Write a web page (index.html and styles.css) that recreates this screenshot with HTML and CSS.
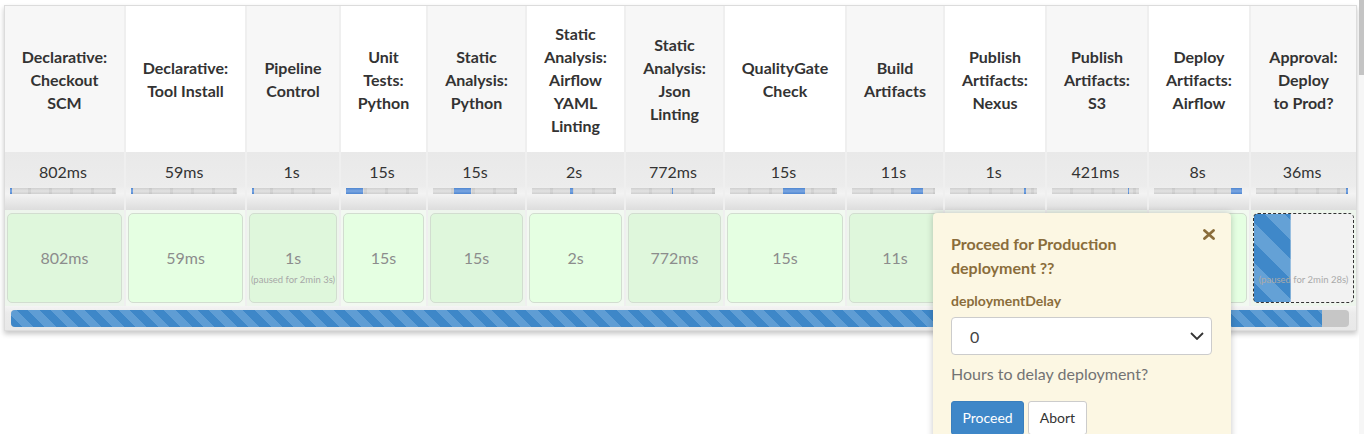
FILE: index.html
```html
<!DOCTYPE html>
<html lang="en">
<head>
<meta charset="utf-8">
<title>Stage View</title>
<link rel="stylesheet" href="styles.css">
</head>
<body>
<div class="stage-view">
  <div class="grid">
    <div class="hd odd">Declarative:<br>Checkout<br>SCM</div>
    <div class="hd">Declarative:<br>Tool Install</div>
    <div class="hd odd">Pipeline<br>Control</div>
    <div class="hd">Unit<br>Tests:<br>Python</div>
    <div class="hd odd">Static<br>Analysis:<br>Python</div>
    <div class="hd">Static<br>Analysis:<br>Airflow<br>YAML<br>Linting</div>
    <div class="hd odd">Static<br>Analysis:<br>Json<br>Linting</div>
    <div class="hd">QualityGate<br>Check</div>
    <div class="hd odd">Build<br>Artifacts</div>
    <div class="hd">Publish<br>Artifacts:<br>Nexus</div>
    <div class="hd odd">Publish<br>Artifacts:<br>S3</div>
    <div class="hd">Deploy<br>Artifacts:<br>Airflow</div>
    <div class="hd odd">Approval:<br>Deploy<br>to Prod?</div>

    <div class="tm odd"><span class="avg">802ms</span><div class="mini"><i style="left:0;width:2px"></i></div></div>
    <div class="tm"><span class="avg">59ms</span><div class="mini"><i style="left:0;width:2px"></i></div></div>
    <div class="tm odd"><span class="avg">1s</span><div class="mini"><i style="left:0;width:2px"></i></div></div>
    <div class="tm"><span class="avg">15s</span><div class="mini"><i style="left:0;width:17px"></i></div></div>
    <div class="tm odd"><span class="avg">15s</span><div class="mini"><i style="left:21px;width:17px"></i></div></div>
    <div class="tm"><span class="avg">2s</span><div class="mini"><i style="left:38px;width:3px"></i></div></div>
    <div class="tm odd"><span class="avg">772ms</span><div class="mini"><i style="left:41px;width:1px"></i></div></div>
    <div class="tm"><span class="avg">15s</span><div class="mini"><i style="left:53px;width:22px"></i></div></div>
    <div class="tm odd"><span class="avg">11s</span><div class="mini"><i style="left:59px;width:12px"></i></div></div>
    <div class="tm"><span class="avg">1s</span><div class="mini"><i style="left:74px;width:2px"></i></div></div>
    <div class="tm odd"><span class="avg">421ms</span><div class="mini"><i style="left:76px;width:1px"></i></div></div>
    <div class="tm"><span class="avg">8s</span><div class="mini"><i style="left:77px;width:11px"></i></div></div>
    <div class="tm odd"><span class="avg">36ms</span><div class="mini"><i style="left:90px;width:2px"></i></div></div>

    <div class="cl odd"><div class="box"><span class="dur">802ms</span></div></div>
    <div class="cl"><div class="box"><span class="dur">59ms</span></div></div>
    <div class="cl odd"><div class="box"><span class="dur">1s</span><span class="paused">(paused for 2min 3s)</span></div></div>
    <div class="cl"><div class="box"><span class="dur">15s</span></div></div>
    <div class="cl odd"><div class="box"><span class="dur">15s</span></div></div>
    <div class="cl"><div class="box"><span class="dur">2s</span></div></div>
    <div class="cl odd"><div class="box"><span class="dur">772ms</span></div></div>
    <div class="cl"><div class="box"><span class="dur">15s</span></div></div>
    <div class="cl odd"><div class="box"><span class="dur">11s</span></div></div>
    <div class="cl"><div class="box"><span class="dur"></span></div></div>
    <div class="cl odd"><div class="box"><span class="dur"></span></div></div>
    <div class="cl"><div class="box"><span class="dur"></span></div></div>
    <div class="cl odd"><div class="box pending"><span class="dur"></span><span class="paused">(paused for 2min 28s)</span></div></div>
  </div>
  <div class="prog-row">
    <div class="track"><div class="fill" style="width:98%"></div></div>
  </div>
</div>

<div class="popup">
  <div class="pop-head">
    <div class="pop-title">Proceed for Production<br>deployment ??</div>
    <svg class="close" width="12" height="11" viewBox="0 0 12 11"><path d="M1.5 1.5 L10.5 9.5 M10.5 1.5 L1.5 9.5" stroke="#8a6d3b" stroke-width="2.8" stroke-linecap="round" fill="none"/></svg>
  </div>
  <div class="pop-label">deploymentDelay</div>
  <div class="select"><span>0</span><svg width="14" height="8" viewBox="0 0 14 8"><path d="M1 1 L7 7 L13 1" stroke="#333" stroke-width="1.8" fill="none"/></svg></div>
  <div class="pop-help">Hours to delay deployment?</div>
  <div class="pop-btns">
    <button class="btn btn-primary">Proceed</button>
    <button class="btn btn-default">Abort</button>
  </div>
</div>

<div class="scrollbar"><div class="thumb"></div></div>
</body>
</html>
```

FILE: styles.css
```css
html, body {
  margin: 0;
  padding: 0;
  background: #fff;
}
body {
  font-family: Lato, "Liberation Sans", sans-serif;
  color: #333;
  position: relative;
  height: 434px;
  overflow: hidden;
}

.stage-view {
  margin: 5px 0 0 4px;
  width: 1351px;
  border: 1px solid #dcdcdc;
  background: #ececec;
  box-shadow: 0 3px 5px rgba(0, 0, 0, 0.22);
}

.grid {
  display: grid;
  grid-template-columns: 119px 119px 92px 85px 97px 97px 97px 120px 96px 100px 100px 100px 105px;
  column-gap: 2px;
  background: #efefef;
}

/* header row */
.hd {
  height: 146px;
  display: flex;
  align-items: center;
  justify-content: center;
  text-align: center;
  font-weight: bold;
  font-size: 16px;
  line-height: 23px;
  color: #333;
  background: #fff;
}
.hd.odd { background: #f7f7f7; }

/* average time row */
.tm {
  height: 58px;
  box-sizing: border-box;
  padding: 9px 8px 0 5px;
  text-align: center;
  background: linear-gradient(to bottom, #e9e9e9 0%, #ececec 58%, #f3f3f3 72%, #dddddd 100%);
}
.avg {
  display: block;
  font-size: 16px;
  line-height: 22px;
  color: #333;
}
.mini {
  position: relative;
  margin-top: 5px;
  height: 6px;
  background:
    repeating-linear-gradient(to right, transparent 0 18px, rgba(0,0,0,0.05) 18px 21px),
    linear-gradient(to bottom, #cfcfcf 0%, #e2e2e2 50%, #cfcfcf 100%);
}
.mini i {
  position: absolute;
  top: 0;
  bottom: 0;
  background: linear-gradient(to bottom, #4f86d0 0%, #7aa6e2 50%, #4f86d0 100%);
}

/* status cells row */
.cl {
  height: 96px;
  box-sizing: border-box;
  padding: 3px 2px;
  background: #f2f9f1;
}
.cl.odd { background: #edf5ec; }
.box {
  height: 100%;
  box-sizing: border-box;
  border: 1px solid #d2ddd0;
  border-radius: 5px;
  background: #e5ffe2;
  display: grid;
  grid-template-rows: 1fr auto 1fr;
  justify-items: center;
  color: #8c8c8c;
}
.cl.odd .box { background: #dff7dc; }
.dur {
  grid-row: 2;
  font-size: 16px;
  line-height: 22px;
  min-height: 22px;
}
.paused {
  grid-row: 3;
  align-self: start;
  margin-top: 4px;
  font-size: 9.5px;
  line-height: 14px;
  color: #a8a8a8;
  white-space: nowrap;
}
.cl.odd .box.pending {
  border: 1px dashed #333;
  background:
    repeating-linear-gradient(45deg, #3f88c9 0 14px, #64a1d6 14px 28px) left top / 37% 100% no-repeat,
    #f2f2f2;
}
.box.pending .paused {
  color: #aaa;
}

/* progress row */
.prog-row {
  height: 24px;
  box-sizing: border-box;
  padding: 4px 7px 3px 6px;
  background: linear-gradient(to bottom, #f4f4f4 0%, #ebebeb 30%, #e8e8e8 100%);
}
.track {
  height: 17px;
  border-radius: 4px;
  background: #c6c6c6;
  overflow: hidden;
}
.fill {
  height: 100%;
  background: repeating-linear-gradient(45deg, #3e87c8 0 8px, #5f9dd4 8px 16px);
}

/* popup */
.popup {
  position: absolute;
  left: 933px;
  top: 213px;
  width: 298px;
  height: 240px;
  box-sizing: border-box;
  padding: 19px 16px 0 18px;
  background: #fcf7e3;
  border-radius: 4px;
  box-shadow: 0 0 7px rgba(0, 0, 0, 0.22);
  color: #8a6d3b;
}
.pop-head {
  display: flex;
  justify-content: space-between;
  align-items: flex-start;
}
.pop-title {
  font-weight: bold;
  font-size: 16px;
  line-height: 24px;
}
.close {
  margin-top: -3px;
}
.pop-label {
  margin-top: 11px;
  font-weight: bold;
  font-size: 14px;
  line-height: 20px;
}
.select {
  margin-top: 6px;
  width: 261px;
  height: 38px;
  box-sizing: border-box;
  border: 1px solid #ccc;
  border-radius: 4px;
  background: #fff;
  display: flex;
  align-items: center;
  justify-content: space-between;
  padding: 0 7px 0 18px;
  font-size: 16px;
  color: #444;
}
.pop-help {
  margin-top: 8px;
  font-size: 16px;
  line-height: 22px;
  color: #737373;
}
.pop-btns {
  margin-top: 16px;
  display: flex;
  gap: 4px;
}
.btn {
  font-family: Lato, "Liberation Sans", sans-serif;
  font-size: 14px;
  line-height: 20px;
  height: 34px;
  padding: 6px 10.5px;
  border-radius: 3px;
  border: 1px solid transparent;
}
.btn-primary {
  background: #3e87c8;
  border-color: #3a7fbd;
  color: #fff;
}
.btn-default {
  background: #fff;
  border-color: #ccc;
  color: #333;
}

/* scrollbar */
.scrollbar {
  position: fixed;
  top: 0;
  right: 0;
  bottom: 0;
  width: 5px;
  background: #f6f6f6;
}
.thumb {
  height: 75px;
  background: #c4c4c4;
}
```
